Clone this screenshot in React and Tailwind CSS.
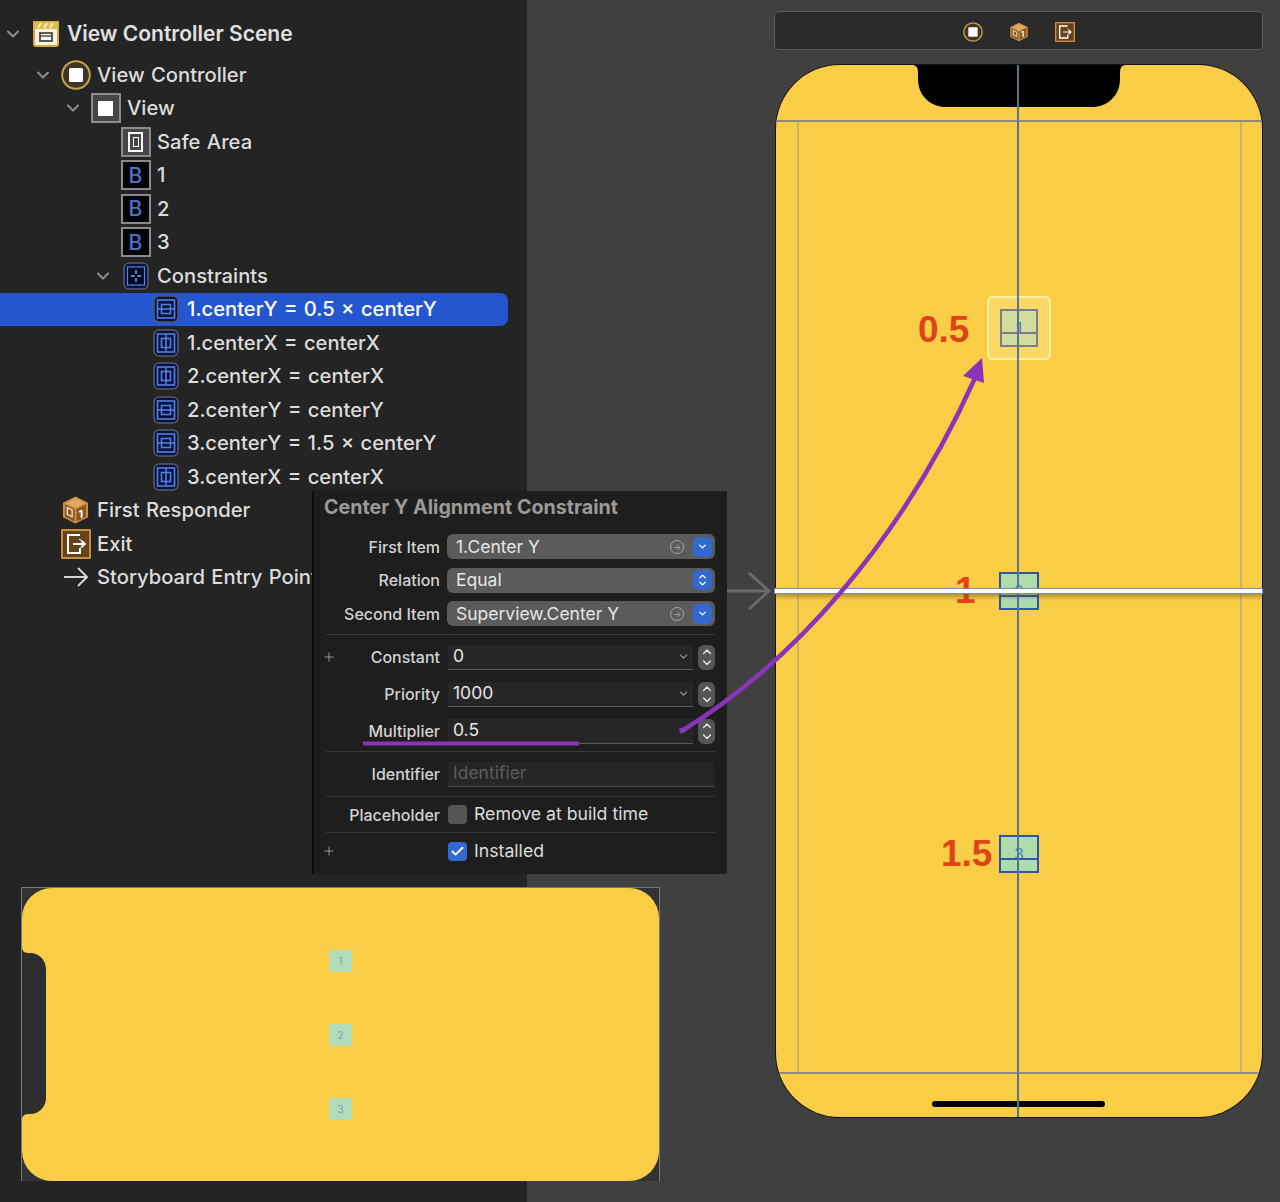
import React from 'react';
import { ChevronDown, ChevronUp, Plus, Check } from 'lucide-react';

const SceneIcon = () => (
	<svg className="w-[28px] h-[28px]" viewBox="0 0 28 28">
		<path d="M2 2h24v22a2 2 0 0 1-2 2H4a2 2 0 0 1-2-2z" fill="#f7f3e4" stroke="#d9a63a" strokeWidth="2" />
		<path d="M2 2h24v7H2z" fill="#e5b64a" />
		<path d="M6 8l3-5M12 8l3-5M18 8l3-5" stroke="#fbeec0" strokeWidth="2" />
		<rect x="8" y="13" width="12" height="8" fill="none" stroke="#4a4a4a" strokeWidth="1.8" />
		<path d="M8 16h12" stroke="#4a4a4a" strokeWidth="1.4" />
	</svg>
);

const ControllerIcon = ({ className = 'w-[30px] h-[30px]' }) => (
	<svg className={className} viewBox="0 0 30 30">
		<circle cx="15" cy="15" r="13.8" fill="#3d3626" stroke="#c9a14a" strokeWidth="2" />
		<rect x="8" y="8" width="14" height="14" rx="1.5" fill="#fff" />
	</svg>
);

const ViewIcon = () => (
	<div className="w-[30px] h-[30px] bg-[#46464a] border-2 border-[#8b8b8b] flex items-center justify-center">
		<div className="w-[15px] h-[15px] bg-white" />
	</div>
);

const SafeAreaIcon = () => (
	<div className="w-[30px] h-[30px] bg-[#46464a] border-2 border-[#8b8b8b] flex items-center justify-center">
		<div className="w-[15px] h-[20px] border-2 border-white flex items-center justify-center">
			<div className="w-[6px] h-[10px] border border-white" />
		</div>
	</div>
);

const ButtonIcon = () => (
	<div className="w-[30px] h-[30px] bg-[#03040a] border-2 border-[#8b8b8b] flex items-center justify-center text-[21px] leading-none text-[#4f70c4]">
		B
	</div>
);

const ConstraintsIcon = () => (
	<svg className="w-[26px] h-[28px]" viewBox="0 0 26 28">
		<rect x="1" y="1" width="24" height="26" rx="5" fill="#0a1238" stroke="#555b70" strokeWidth="1.5" />
		<rect x="4.500" y="5" width="17" height="18" fill="#060a24" stroke="#4f7fe6" strokeWidth="1.2" />
		<path d="M13 8v4M13 16v4M8 14h3.500M14.500 14h3.500" stroke="#8fb0f0" strokeWidth="1.3" />
	</svg>
);

const ConstraintIcon = ({ axis }) => (
	<svg className="w-[26px] h-[28px]" viewBox="0 0 26 28">
		<rect x="1" y="1" width="24" height="26" rx="5" fill="#0a1238" stroke="#555b70" strokeWidth="1.5" />
		<rect x="4.500" y="5" width="17" height="18" fill="none" stroke="#4f7fe6" strokeWidth="1.6" />
		<rect x="8.500" y="9.500" width="9" height="9" fill="none" stroke="#4f7fe6" strokeWidth="1.6" />
		{axis === 'Y' ? (
			<path d="M4.500 14h17" stroke="#4f7fe6" strokeWidth="1.6" />
		) : (
			<path d="M13 5v18" stroke="#4f7fe6" strokeWidth="1.6" />
		)}
	</svg>
);

const CubeIcon = ({ className = 'w-[27px] h-[30px]' }) => (
	<svg className={className} viewBox="0 0 28 30">
		<path d="M14 1l13 6.500v15L14 29 1 22.500v-15z" fill="#cf8f45" />
		<path d="M14 3l10 5-10 5-10-5z" fill="#dfa964" />
		<path d="M13 14v13L3 22V9z" fill="#8a5a22" />
		<path d="M15 14v13l10-5V9z" fill="#8a5a22" />
		<path d="M5.500 12.500l5 2.500v7l-5-2.500z" fill="none" stroke="#f4e3c4" strokeWidth="1.400" />
		<text x="17" y="23" fontSize="11" fontWeight="700" fill="#fff" fontFamily="Inter, sans-serif">1</text>
	</svg>
);

const ExitIcon = ({ className = 'w-[30px] h-[30px]' }) => (
	<svg className={className} viewBox="0 0 30 30">
		<rect x="1" y="1" width="28" height="28" fill="#66431a" stroke="#c98d3f" strokeWidth="2" />
		<path d="M19 6H7v18h12v-5" fill="none" stroke="#fff" strokeWidth="2" />
		<path d="M19 11v-1M12 15h12M20 11.500l4 3.500-4 3.500" fill="none" stroke="#fff" strokeWidth="1.800" />
	</svg>
);

const EntryIcon = () => (
	<svg className="w-[26px] h-[22px]" viewBox="0 0 26 22">
		<path d="M1 11h23M15 2l9 9-9 9" fill="none" stroke="#d6d6d6" strokeWidth="2" />
	</svg>
);

const treeRows = [
	{ label: 'View Controller', pad: 'pl-[30px]', chevron: true, icon: <ControllerIcon /> },
	{ label: 'View', pad: 'pl-[60px]', chevron: true, icon: <ViewIcon /> },
	{ label: 'Safe Area', pad: 'pl-[90px]', icon: <SafeAreaIcon /> },
	{ label: '1', pad: 'pl-[90px]', icon: <ButtonIcon /> },
	{ label: '2', pad: 'pl-[90px]', icon: <ButtonIcon /> },
	{ label: '3', pad: 'pl-[90px]', icon: <ButtonIcon /> },
	{ label: 'Constraints', pad: 'pl-[90px]', chevron: true, icon: <ConstraintsIcon /> },
	{ label: '1.centerY = 0.5 × centerY', pad: 'pl-[120px]', selected: true, icon: <ConstraintIcon axis="Y" /> },
	{ label: '1.centerX = centerX', pad: 'pl-[120px]', icon: <ConstraintIcon axis="X" /> },
	{ label: '2.centerX = centerX', pad: 'pl-[120px]', icon: <ConstraintIcon axis="X" /> },
	{ label: '2.centerY = centerY', pad: 'pl-[120px]', icon: <ConstraintIcon axis="Y" /> },
	{ label: '3.centerY = 1.5 × centerY', pad: 'pl-[120px]', icon: <ConstraintIcon axis="Y" /> },
	{ label: '3.centerX = centerX', pad: 'pl-[120px]', icon: <ConstraintIcon axis="X" /> },
	{ label: 'First Responder', pad: 'pl-[30px]', icon: <CubeIcon /> },
	{ label: 'Exit', pad: 'pl-[30px]', icon: <ExitIcon /> },
	{ label: 'Storyboard Entry Point', pad: 'pl-[30px]', icon: <EntryIcon /> },
];

const TreeRow = ({ row }) => (
	<div className={`h-[33.5px] w-[508px] flex items-center whitespace-nowrap text-[20.2px] font-medium [word-spacing:1px] text-[#dcdcdc] ${row.pad} ${row.selected ? 'bg-[#2457cf] rounded-r-lg text-white' : ''}`}>
		<div className="w-[25px] flex justify-center text-[#8c8c8c]">
			{row.chevron && <ChevronDown size={20} strokeWidth={2.5} />}
		</div>
		<div className="w-[41px] flex justify-center">{row.icon}</div>
		<span className="ml-[1px]">{row.label}</span>
	</div>
);

const Label = ({ children, plus }) => (
	<div className="w-[126px] pl-[8px] flex items-center justify-between text-[16px] font-medium text-[#d2d2d2]">
		<span className="w-[14px] text-[#a8a8a8]">{plus && <Plus size={14} strokeWidth={1.5} />}</span>
		<span>{children}</span>
	</div>
);

const Popup = ({ value, link, blueFull }) => (
	<div className="ml-[7px] w-[268px] h-[25px] rounded-[6px] bg-[#5b5b5b] flex items-center pl-[9px] pr-[3px] text-[17.5px] text-[#e6e6e6]">
		<span className="flex-1">{value}</span>
		{link && (
			<div className="w-[14px] h-[14px] mr-[9px] rounded-full border border-[#a8a8a8] flex items-center justify-center text-[9px] leading-none text-[#a8a8a8]">→</div>
		)}
		<div className="w-[19px] h-[20px] rounded-[5px] bg-[#3368cf] flex flex-col items-center justify-center text-white">
			{blueFull && <ChevronUp size={11} strokeWidth={3} className="-mb-[2px]" />}
			<ChevronDown size={11} strokeWidth={3} className={blueFull ? '-mt-[2px]' : ''} />
		</div>
	</div>
);

const NumberField = ({ value }) => (
	<div className="ml-[8px] flex items-center">
		<div className="w-[245px] h-[25px] bg-[#262626] border-b border-[#5a5a5a] flex items-center pl-[5px] pr-[3px] text-[17.5px] text-[#e6e6e6]">
			<span className="flex-1">{value}</span>
			<ChevronDown size={13} strokeWidth={2} className="text-[#9a9a9a]" />
		</div>
		<div className="ml-[5px] w-[17px] h-[25px] rounded-[6px] bg-[#555555] flex flex-col items-center justify-center text-[#e6e6e6]">
			<ChevronUp size={14} strokeWidth={2.5} className="-mb-[1px]" />
			<ChevronDown size={14} strokeWidth={2.5} className="-mt-[1px]" />
		</div>
	</div>
);

const Separator = ({ className = '' }) => <div className={`h-px ml-[12px] mr-[12px] bg-[#3a3a3a] ${className}`} />;

const Inspector = () => (
	<div className="absolute left-[312px] top-[491px] w-[415px] h-[383px] bg-[#1e1e1e] border-l-2 border-[#0c0c0c]">
		<div className="h-[39px] pl-[10px] pt-[2px] text-[19.7px] font-bold text-[#9a9a9a] whitespace-nowrap">Center Y Alignment Constraint</div>
		<div className="h-[33.5px] flex items-center"><Label>First Item</Label><Popup value="1.Center Y" link /></div>
		<div className="h-[33.5px] flex items-center"><Label>Relation</Label><Popup value="Equal" blueFull /></div>
		<div className="h-[33.5px] flex items-center"><Label>Second Item</Label><Popup value="Superview.Center Y" link /></div>
		<Separator className="mt-[3px]" />
		<div className="mt-[4px] h-[37px] flex items-center"><Label plus>Constant</Label><NumberField value="0" /></div>
		<div className="h-[37px] flex items-center"><Label>Priority</Label><NumberField value="1000" /></div>
		<div className="h-[37px] flex items-center"><Label>Multiplier</Label><NumberField value="0.5" /></div>
		<Separator className="mt-[1.5px]" />
		<div className="h-[44px] flex items-center">
			<Label>Identifier</Label>
			<div className="ml-[8px] w-[266px] h-[25px] bg-[#262626] border-b border-[#4a4a4a] flex items-center pl-[5px] text-[17.5px] text-[#5c5c5c]">Identifier</div>
		</div>
		<Separator />
		<div className="h-[35px] flex items-center">
			<Label>Placeholder</Label>
			<div className="ml-[8px] w-[19px] h-[19px] rounded-[4px] bg-[#555555]" />
			<span className="ml-[7px] text-[17.7px] text-[#dcdcdc]">Remove at build time</span>
		</div>
		<Separator />
		<div className="h-[36px] flex items-center">
			<Label plus />
			<div className="ml-[8px] w-[19px] h-[19px] rounded-[4px] bg-[#3368cf] flex items-center justify-center text-white">
				<Check size={15} strokeWidth={3} />
			</div>
			<span className="ml-[7px] text-[17.7px] text-[#dcdcdc]">Installed</span>
		</div>
	</div>
);

const Preview = () => (
	<div className="absolute left-[21px] top-[887px] w-[639px] h-[294px] bg-[#333333] border-l border-t border-r border-[#7a7a7a]">
		<div className="relative h-full rounded-[30px] bg-[#f9cd46] flex flex-col items-center pt-[62px] gap-[52px]">
			<svg className="absolute left-0 top-[59px] w-[24px] h-[173px]" viewBox="0 0 24 173">
				<path d="M0 0C0 5 3 6 8 6C18 6 24 14 24 22V151C24 159 18 167 8 167C3 167 0 168 0 173z" fill="#2e2e2e" />
			</svg>
			{['1', '2', '3'].map((n) => (
				<div key={n} className="w-[23px] h-[22px] bg-[#b0dcb8] flex items-center justify-center text-[10px] text-[#7e9fb0]">{n}</div>
			))}
		</div>
	</div>
);

const PhoneButton = ({ label, position, selected }) => (
	<div className={`absolute h-[38px] border-2 flex items-center justify-center text-[16px] text-[#4a80d0] ${position} ${selected ? 'w-[38px] bg-[#d2dd9c] border-[#7c7c8c]' : 'w-[40px] bg-[#aedcaa] border-[#2f55a8]'}`}>
		{label}
		<div className={`absolute left-0 right-0 top-[21px] h-[2px] ${selected ? 'bg-[#7c7c8c]' : 'bg-[#2f55a8]'}`} />
	</div>
);

const Phone = () => (
	<div className="relative ml-[2px] mt-[15px] w-[486px] h-[1052px] rounded-[64px] bg-[#f9cd46] shadow-[0_0_0_1px_#141414] overflow-hidden">
		<svg className="absolute left-[136px] top-0 w-[214px] h-[42px]" viewBox="0 0 214 42">
			<path d="M0 0C4 0 6 2 6 8V14C6 32 20 42 34 42H180C194 42 208 32 208 14V8C208 2 210 0 214 0z" fill="#000" />
		</svg>
		<div className="absolute left-[21px] top-[55px] h-[952px] w-[2px] bg-[#c9b36a]" />
		<div className="absolute left-[464px] top-[55px] h-[952px] w-[2px] bg-[#c9b36a]" />
		<div className="absolute left-0 right-0 top-[55px] h-[2px] bg-[#8f8a80]" />
		<div className="absolute left-0 right-0 top-[1007px] h-[2px] bg-[#8f8a80]" />
		<div className="absolute left-[156px] top-[1036px] w-[173px] h-[6px] rounded-full bg-black" />
		<div className="absolute left-[211px] top-[231px] w-[64px] h-[64px] rounded-[6px] border-2 border-[#fdf0a8] bg-[#f9d866]" />
		<PhoneButton label="1" position="left-[224px] top-[244px]" selected />
		<PhoneButton label="2" position="left-[223px] top-[507px]" />
		<PhoneButton label="3" position="left-[223px] top-[770px]" />
		<div className="absolute left-[241px] top-0 bottom-0 w-[2px] bg-[#567590]" />
		<span className="absolute left-[142px] top-[245px] text-[37px] leading-[40px] font-bold font-['Liberation_Sans'] text-[#e0431a]">0.5</span>
		<span className="absolute left-[179px] top-[506px] text-[37px] leading-[40px] font-bold font-['Liberation_Sans'] text-[#e0431a]">1</span>
		<span className="absolute left-[165px] top-[769px] text-[37px] leading-[40px] font-bold font-['Liberation_Sans'] text-[#e0431a]">1.5</span>
	</div>
);

const Annotations = () => (
	<svg className="absolute left-0 top-0 w-[1280px] h-[1202px] pointer-events-none" viewBox="0 0 1280 1202">
		<path d="M680 732C790 665 900 545 975 378" fill="none" stroke="#8a35b5" strokeWidth="4.500" />
		<path d="M982 358L963 376L984 383z" fill="#8a35b5" />
		<path d="M363 743.500H579" stroke="#8a35b5" strokeWidth="4" />
	</svg>
);

export default function App() {
	return (
		<div className="relative w-[1280px] h-[1202px] overflow-hidden flex font-['Inter',sans-serif]">
			<aside className="w-[527px] h-full bg-[#242424] pt-[17px]">
				<div className="h-[34px] mb-[7px] flex items-center whitespace-nowrap text-[21px] font-semibold text-[#e0e0e0]">
					<div className="w-[25px] flex justify-center text-[#8c8c8c]"><ChevronDown size={20} strokeWidth={2.5} /></div>
					<div className="w-[41px] flex justify-center"><SceneIcon /></div>
					<span className="ml-[1px]">View Controller Scene</span>
				</div>
				{treeRows.map((row) => <TreeRow key={row.label} row={row} />)}
			</aside>
			<main className="relative flex-1 h-full bg-[#404040] pt-[11px] pl-[247px]">
				<div className="w-[489px] h-[39px] pt-[2px] rounded-[5px] bg-[#2b2b2b] border border-[#5c5c5c] flex items-center justify-center gap-[26px]">
					<ControllerIcon className="w-[20px] h-[20px]" />
					<CubeIcon className="w-[20px] h-[20px]" />
					<ExitIcon className="w-[20px] h-[20px]" />
				</div>
				<Phone />
				{/* selected constraint guide, runs across the device */}
				<div className="absolute left-[247px] top-[588px] w-[489px] h-[6px] bg-white border border-[#7d8ea5] shadow-[0_3px_4px_rgba(90,70,20,0.45)]" />
				<svg className="absolute left-[198px] top-[570px] w-[48px] h-[42px]" viewBox="0 0 48 42">
					<path d="M2 21h42M24 3l20 18-20 18" fill="none" stroke="#6a6a6a" strokeWidth="3" />
				</svg>
			</main>
			<Preview />
			<Inspector />
			<Annotations />
		</div>
	);
}
